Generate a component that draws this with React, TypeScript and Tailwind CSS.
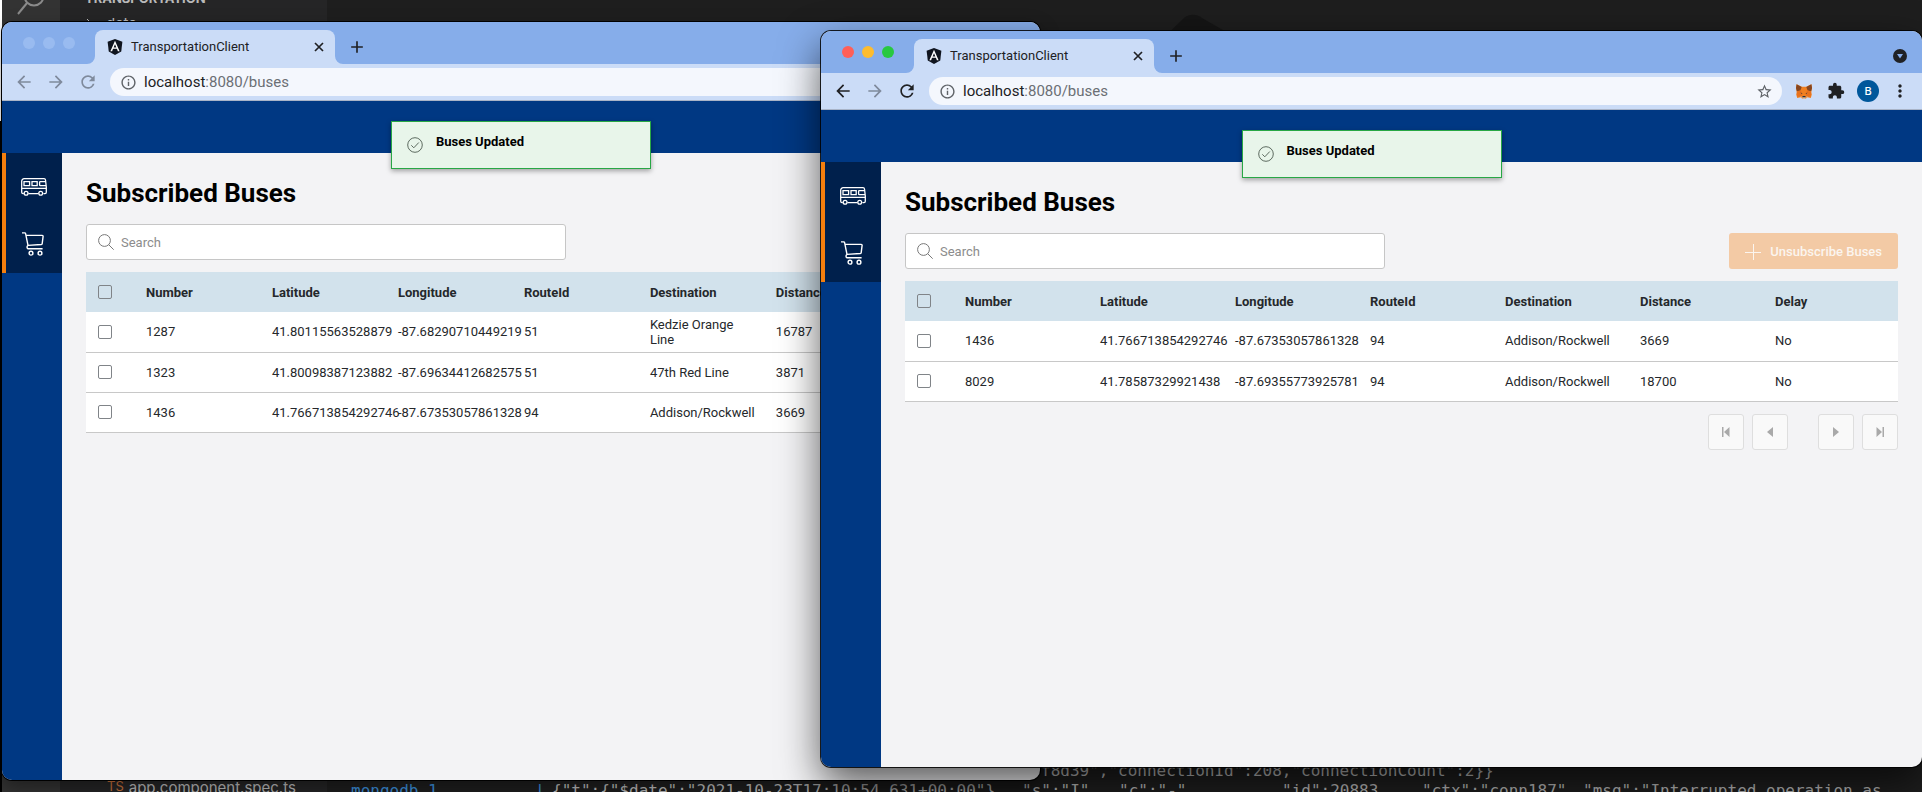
import React, { useId } from "react";
import {
  MdAdd,
  MdArrowBack,
  MdArrowForward,
  MdClose,
  MdExtension,
  MdInfoOutline,
  MdMoreVert,
  MdRefresh,
  MdStarBorder,
} from "react-icons/md";

type Bus = {
  number: string;
  latitude: string;
  longitude: string;
  routeId: string;
  destination: string;
  distance: string;
  delay: string;
};

const COLUMNS: { key: keyof Bus; label: string }[] = [
  { key: "number", label: "Number" },
  { key: "latitude", label: "Latitude" },
  { key: "longitude", label: "Longitude" },
  { key: "routeId", label: "RouteId" },
  { key: "destination", label: "Destination" },
  { key: "distance", label: "Distance" },
  { key: "delay", label: "Delay" },
];

const FIRST_BUSES: Bus[] = [
  { number: "1287", latitude: "41.80115563528879", longitude: "-87.68290710449219", routeId: "51", destination: "Kedzie Orange Line", distance: "16787", delay: "No" },
  { number: "1323", latitude: "41.80098387123882", longitude: "-87.69634412682575", routeId: "51", destination: "47th Red Line", distance: "3871", delay: "No" },
  { number: "1436", latitude: "41.766713854292746", longitude: "-87.67353057861328", routeId: "94", destination: "Addison/Rockwell", distance: "3669", delay: "No" },
];

const SECOND_BUSES: Bus[] = [
  { number: "1436", latitude: "41.766713854292746", longitude: "-87.67353057861328", routeId: "94", destination: "Addison/Rockwell", distance: "3669", delay: "No" },
  { number: "8029", latitude: "41.78587329921438", longitude: "-87.69355773925781", routeId: "94", destination: "Addison/Rockwell", distance: "18700", delay: "No" },
];

function AngularLogo() {
  return (
    <svg viewBox="31 29 188 202" className="h-4 w-4 shrink-0" aria-hidden="true">
      <path fill="#10151f" d="M125 30L31.9 63.2l14.2 123.1L125 230l78.9-43.7 14.2-123.1z" />
      <path fill="#fff" d="M125 52.1L66.8 182.6h21.7l11.7-29.2h49.4l11.7 29.2H183L125 52.1zm17 83.3h-34l17-40.9 17 40.9z" />
    </svg>
  );
}

function FoxLogo() {
  return (
    <svg viewBox="0 0 16 15" className="h-[15px] w-4" aria-hidden="true">
      <path fill="#f08021" d="M.6.3 5.8 2.8h4.4L15.4.3 16 4l-.8 4 .6 2.4-1 3.7-3.4-.8-1.7 1.5H6.3l-1.7-1.5-3.4.8-1-3.7L.8 8 0 4z" />
      <path fill="#87461f" d="M.6.3 5.7 3 4.4 6.6.8 7.2 0 4zM15.4.3 10.3 3l1.3 3.6 3.6.6L16 4z" />
      <path fill="#e8711c" d="m.8 7.6 4-1 1.6 3-.8 2.9-4.4.2zM15.2 7.6l-4-1-1.6 3 .8 2.9 4.4.2z" />
      <path fill="#233447" d="m4.4 8.5 2 .9-.6.7zM11.6 8.5l-2 .9.6.7zM6.6 12h2.8l.2 1.4H6.4z" />
      <path fill="#d8c6b6" d="M6.2 13.5h3.6l-.3 1.3h-3zM4.2 12.3l1.5.4.2 1.2zM11.8 12.3l-1.5.4-.2 1.2z" />
    </svg>
  );
}

function BusIcon() {
  return (
    <svg viewBox="0 0 26 18" className="h-[18px] w-[26px]" fill="none" stroke="#fff" strokeWidth="1.3" aria-hidden="true">
      <path d="M2.8 15.6H2A1.3 1.3 0 0 1 .7 14.3V3.2A2.5 2.5 0 0 1 3.2.7H23a1.5 1.5 0 0 1 1.5 1.3l.8 7v5.3a1.3 1.3 0 0 1-1.3 1.3h-1.600M7.4 15.6h10" />
      <path d="M3 3.6h5.600v4H3zM11 3.6h5.200v4H11zM24.6 3.6h-5.400a.6.6 0 0 0-.6.6v2.800a.6.6 0 0 0 .6.6h5.800M.7 10.4h24.600" />
      <circle cx="5.1" cy="15.3" r="1.9" />
      <circle cx="19.7" cy="15.3" r="1.9" />
    </svg>
  );
}

function CartIcon() {
  return (
    <svg viewBox="0 0 24 24" className="h-6 w-6" fill="none" stroke="#fff" strokeWidth="1.4" strokeLinejoin="round" aria-hidden="true">
      <path d="M0 .9h2.600a1 1 0 0 1 1 .8L6 13.400M3.900 3.400h16.300a.9.9 0 0 1 .9 1l-.9 7.200a1 1 0 0 1-.9.900L6 13.400a2 2 0 0 0-.2 3.300h14.800" />
      <circle cx="9" cy="21.2" r="1.9" />
      <circle cx="18" cy="21.2" r="1.9" />
    </svg>
  );
}

function SearchIcon() {
  return (
    <svg viewBox="0 0 16 16" className="h-4 w-4 shrink-0" fill="none" stroke="#777" aria-hidden="true">
      <circle cx="6.5" cy="6.5" r="5.9" />
      <path d="m10.7 10.7 5 5" />
    </svg>
  );
}

function BrowserChrome({ active }: { active: boolean }) {
  const tone = active ? "text-[#202124]" : "text-[#7f8a9c]";
  const lights = active ? ["bg-[#ff5f57]", "bg-[#febc2e]", "bg-[#28c840]"] : ["bg-[#99bbf0]", "bg-[#99bbf0]", "bg-[#99bbf0]"];
  return (
    <div className="font-['Inter','Liberation_Sans',sans-serif]">
      <div className="flex h-[42px] items-end bg-[#86adea] pr-[15px]">
        <div className="flex h-[42px] items-center gap-2 pl-[21px]">
          {lights.map((c, i) => (
            <span key={i} className={`h-3 w-3 rounded-full ${c}`} />
          ))}
        </div>
        <svg viewBox="0 0 8 8" className="ml-3 h-2 w-2 shrink-0 fill-[#cbdcf7]" aria-hidden="true">
          <path d="M8 0v8H0a8 8 0 0 0 8-8z" />
        </svg>
        <div className="flex h-[34px] w-60 shrink-0 items-center rounded-t-lg bg-[#cbdcf7] pr-[9px] pl-3">
          <AngularLogo />
          <span className="ml-2 flex-1 font-['Roboto','Liberation_Sans',sans-serif] text-[13px] text-[#202124]">TransportationClient</span>
          <button type="button" aria-label="Close tab" className="text-[#202124]">
            <svg viewBox="0 0 14 14" className="h-[14px] w-[14px]" stroke="currentColor" strokeWidth="1.7" aria-hidden="true">
              <path d="m3 3 8 8M11 3l-8 8" />
            </svg>
          </button>
        </div>
        <svg viewBox="0 0 8 8" className="h-2 w-2 shrink-0 fill-[#cbdcf7]" aria-hidden="true">
          <path d="M0 0v8h8a8 8 0 0 1-8-8z" />
        </svg>
        <button type="button" aria-label="New tab" className="ml-1 flex h-[34px] items-center text-[#202124]">
          <MdAdd size={20} />
        </button>
        {active && (
          <button type="button" aria-label="Search tabs" className="ml-auto flex h-[34px] items-center">
            <svg viewBox="0 0 14 14" className="h-[14px] w-[14px]" aria-hidden="true">
              <circle cx="7" cy="7" r="7" fill="#202124" />
              <path d="M4 5h6L7 9.600z" fill="#86adea" />
            </svg>
          </button>
        )}
      </div>
      <div className="flex h-[37px] items-center border-b border-[#a9b4c8] bg-[#cbdcf7] pr-3">
        <div className={`flex items-center gap-3 pl-3 ${tone}`}>
          <button type="button" aria-label="Back"><MdArrowBack size={20} /></button>
          <button type="button" aria-label="Forward" className="text-[#7f8a9c]"><MdArrowForward size={20} /></button>
          <button type="button" aria-label="Reload"><MdRefresh size={20} /></button>
        </div>
        <div className="ml-3 flex h-7 min-w-0 flex-1 items-center rounded-full bg-[#f4f7fd] pr-[9px] pl-[10px]">
          <MdInfoOutline size={17} className="shrink-0 text-[#5f6368]" />
          <a href="#buses" className="ml-[7px] flex-1 font-['Roboto','Liberation_Sans',sans-serif] text-[15px] text-[#6b6f75]">
            <span className="text-[#202124]">localhost</span>:8080/buses
          </a>
          <button type="button" aria-label="Bookmark"><MdStarBorder size={17} className="text-[#5f6368]" /></button>
        </div>
        <div className="flex items-center pl-[14px]">
          <button type="button" aria-label="Wallet"><FoxLogo /></button>
          <button type="button" aria-label="Extensions" className="ml-[15px] text-[#202124]"><MdExtension size={18} /></button>
          <button type="button" className="ml-3 h-[22px] w-[22px] rounded-full bg-[#00579b] text-[11px] font-medium text-white">B</button>
          <button type="button" aria-label="Menu" className="ml-[11px] text-[#202124]"><MdMoreVert size={20} /></button>
        </div>
      </div>
    </div>
  );
}

function Tick({ label }: { label: string }) {
  return (
    <input
      type="checkbox"
      aria-label={label}
      className="block h-[14px] w-[14px] appearance-none rounded-xs border border-[#808488]"
    />
  );
}

function BusTable({ buses }: { buses: Bus[] }) {
  return (
    <table className="w-full table-fixed text-left text-[13px] leading-[15px] text-[#25282b]">
      <thead>
        <tr className="h-10 bg-[#d2e2ec]">
          <th className="w-12 pl-3"><Tick label="Select all buses" /></th>
          {COLUMNS.map((c) => (
            <th key={c.key} className="px-3 font-bold">{c.label}</th>
          ))}
        </tr>
      </thead>
      <tbody>
        {buses.map((bus) => (
          <tr key={bus.number} className="h-10 border-b border-[#c8c8c8] bg-white">
            <td className="pl-3"><Tick label={`Select bus ${bus.number}`} /></td>
            {COLUMNS.map((c) => (
              <td key={c.key} className="px-3">{bus[c.key]}</td>
            ))}
          </tr>
        ))}
      </tbody>
    </table>
  );
}

function PageButton({ label, d }: { label: string; d: string }) {
  return (
    <button type="button" aria-label={label} className="flex h-9 w-9 items-center justify-center rounded-[3px] border border-[#dedede] bg-[#f9f9f9]">
      <svg viewBox="0 0 8 12" className="h-3 w-2 fill-[#a9a9a9]" aria-hidden="true"><path d={d} /></svg>
    </button>
  );
}

function BrowserWindow({ active, buses, className }: { active: boolean; buses: Bus[]; className: string }) {
  const searchId = useId();
  return (
    <section className={`absolute flex flex-col overflow-hidden rounded-[10px] bg-[#f3f3f5] ${className}`}>
      <BrowserChrome active={active} />
      <header className="relative h-[52px] shrink-0 bg-[#003883]">
        <div role="status" className="absolute top-5 left-1/2 z-10 flex h-12 w-[260px] -translate-x-1/2 border border-[#28a745] bg-[#e8f5ea] pt-3 pl-[15px] shadow-[0_2px_5px_rgba(0,0,0,0.35)]">
          <svg viewBox="0 0 16 16" className="mt-[3px] h-4 w-4" fill="none" stroke="#5d6b60" aria-hidden="true">
            <circle cx="8" cy="8" r="7.300" />
            <path d="m4.300 8.300 2.500 2.500 5-5.300" />
          </svg>
          <strong className="ml-[13px] text-[13px] leading-4 text-black">Buses Updated</strong>
        </div>
      </header>
      <div className="flex min-h-0 flex-1">
        <nav className="w-[60px] shrink-0 bg-[#003883]">
          <div className="border-l-4 border-[#f57f0e] bg-[#00204c] pt-[5px] pb-px shadow-[0_-1px_0_#0067b8]">
            <a href="#buses" aria-label="Buses" className="flex h-[57px] items-center justify-center"><BusIcon /></a>
            <a href="#cart" aria-label="Cart" className="flex h-[57px] items-center justify-center"><CartIcon /></a>
          </div>
        </nav>
        <main className="min-w-0 flex-1 p-6">
          <h1 className="mb-[15px] text-[26px] leading-8 font-bold text-black">Subscribed Buses</h1>
          <div className="mb-3 flex items-center justify-between">
            <label htmlFor={searchId} className="flex h-9 w-[480px] items-center gap-[7px] rounded-[3px] border border-[#c6c6c6] bg-white px-[11px]">
              <SearchIcon />
              <span className="sr-only">Search buses</span>
              <input id={searchId} type="text" placeholder="Search" className="min-w-0 flex-1 pt-px text-[13px] outline-none placeholder:text-[#8c8c8c]" />
            </label>
            {active && (
              <button type="button" disabled className="flex h-9 items-center rounded-[3px] bg-[#f3caa5] px-4 pt-px text-[13px] font-medium text-[#fbf5ef]">
                <svg viewBox="0 0 16 16" className="mr-[9px] h-4 w-4" stroke="#fbf5ef" aria-hidden="true"><path d="M0 8.500h16M8.500 0v16" /></svg>
                Unsubscribe Buses
              </button>
            )}
          </div>
          <BusTable buses={buses} />
          {active && (
            <div className="mt-3 flex justify-end gap-2">
              <PageButton label="First page" d="M0 1h1.500v10H0zM7.500 1v10L2 6z" />
              <PageButton label="Previous page" d="M7 1v10L1 6z" />
              <span className="w-[14px]" />
              <PageButton label="Next page" d="M1 1v10l6-5z" />
              <PageButton label="Last page" d="M6.500 1H8v10H6.500zM.5 1v10L6 6z" />
            </div>
          )}
        </main>
      </div>
    </section>
  );
}

function EditorBackdrop() {
  return (
    <div className="absolute inset-0 flex overflow-hidden bg-[#1e1e1e] text-[#b9b9b9]">
      <div className="flex w-[2px] flex-col bg-black"><span className="h-[121px] bg-white" /></div>
      <div className="w-[58px] bg-[#333]">
        <svg viewBox="0 0 58 24" className="w-[58px]" fill="none" stroke="#8a8a8a" strokeWidth="2" aria-hidden="true">
          <circle cx="32" cy="-4" r="9.500" />
          <path d="m25 3-9 11" />
        </svg>
      </div>
      <div className="flex w-[267px] flex-col justify-between bg-[#252526] font-['Inter','Liberation_Sans',sans-serif]">
        <div className="-mt-[10px]">
          <p className="flex items-center gap-[5px] pl-2 text-[13px] leading-4 font-bold">
            <svg viewBox="0 0 12 12" className="h-3 w-3" fill="none" stroke="currentColor" aria-hidden="true"><path d="m2 4 4 4 4-4" /></svg>
            TRANSPORTATION
          </p>
          <p className="flex items-center gap-2 pt-2 pl-6 text-[15px] leading-5">
            <svg viewBox="0 0 14 14" className="h-[14px] w-[14px]" fill="none" stroke="currentColor" aria-hidden="true"><path d="m3 2 5 5-5 5" /></svg>
            data
          </p>
        </div>
        <p className="-mb-[6px] flex items-start gap-[5px] pl-[47px] text-[15px] leading-5 whitespace-nowrap">
          <span className="text-[13px] leading-4 text-[#c5703b]">TS</span>app.component.spec.ts
        </p>
      </div>
      <div className="flex min-w-0 flex-1 flex-col justify-between font-['DejaVu_Sans_Mono',monospace] text-[16px] leading-5">
        <svg viewBox="0 0 100 60" className="mt-[14px] ml-[825px] h-[60px] w-[100px]" aria-hidden="true">
          <path fill="#151515" d="M5 30 32 4a14 14 0 0 1 18 0l35 20v36H5z" />
        </svg>
        <div className="-mb-[9px] whitespace-pre">
          <p className="pl-[714px]">{'f8d39","connectionId":208,"connectionCount":2}}'}</p>
          <div className="flex">
            <span className="w-[184px] shrink-0 pl-6 text-[#3b8eda]">mongodb_1</span>
            <span className="w-[41px] shrink-0 pl-6 text-[#3b8eda]">|</span>
            <span className="w-[470px] shrink-0">{'{"t":{"$date":"2021-10-23T17:10:54.631+00:00"},'}</span>
            <span className="w-[97px] shrink-0">{'"s":"I",'}</span>
            <span className="w-[163px] shrink-0">{'"c":"-",'}</span>
            <span className="w-[140px] shrink-0">{'"id":20883,'}</span>
            <span className="w-[161px] shrink-0">{'"ctx":"conn187",'}</span>
            <span>{'"msg":"Interrupted operation as'}</span>
          </div>
        </div>
      </div>
    </div>
  );
}

export default function App() {
  return (
    <div className="relative h-screen overflow-hidden font-['Roboto','Liberation_Sans',sans-serif]">
      <EditorBackdrop />
      <BrowserWindow
        active={false}
        buses={FIRST_BUSES}
        className="top-[22px] bottom-3 left-[2px] w-[54%] shadow-[0_0_0_1px_#000,0_8px_20px_rgba(0,0,0,0.4)]"
      />
      <BrowserWindow
        active
        buses={SECOND_BUSES}
        className="top-[31px] right-0 bottom-[25px] left-[821px] shadow-[0_0_0_1px_rgba(0,0,0,0.85),0_16px_40px_rgba(0,0,0,0.65)]"
      />
    </div>
  );
}
